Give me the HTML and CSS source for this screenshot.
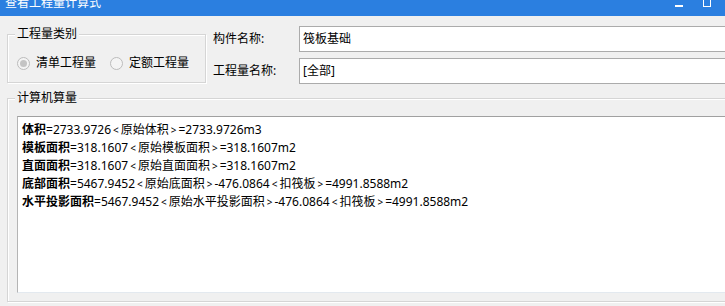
FILE: index.html
```html
<!DOCTYPE html>
<html lang="zh-CN">
<head>
<meta charset="utf-8">
<title>查看工程量计算式</title>
<link rel="stylesheet" href="styles.css">
</head>
<body>
<div class="window">
  <div class="titlebar">
    <span class="title">查看工程量计算式</span>
    <span class="controls">
      <span class="btn-min"></span>
      <span class="btn-max"></span>
    </span>
  </div>
  <div class="content">
    <div class="top-row">
      <fieldset class="group group-type">
        <legend>工程量类别</legend>
        <div class="radio-row">
          <span class="radio checked"><span class="dot"></span></span>
          <span class="radio-label">清单工程量</span>
          <span class="radio second"></span>
          <span class="radio-label">定额工程量</span>
        </div>
      </fieldset>
      <div class="form">
        <div class="form-row">
          <span class="form-label">构件名称:</span>
          <span class="input">筏板基础</span>
        </div>
        <div class="form-row">
          <span class="form-label">工程量名称:</span>
          <span class="input">[全部]</span>
        </div>
      </div>
    </div>
    <fieldset class="group group-calc">
      <legend>计算机算量</legend>
      <div class="textbox">
        <div class="line"><b>体积</b>=2733.9726<span class="ang">&lt;</span>原始体积<span class="ang">&gt;</span>=2733.9726m3</div>
        <div class="line"><b>模板面积</b>=318.1607<span class="ang">&lt;</span>原始模板面积<span class="ang">&gt;</span>=318.1607m2</div>
        <div class="line"><b>直面面积</b>=318.1607<span class="ang">&lt;</span>原始直面面积<span class="ang">&gt;</span>=318.1607m2</div>
        <div class="line"><b>底部面积</b>=5467.9452<span class="ang">&lt;</span>原始底面积<span class="ang">&gt;</span>-476.0864<span class="ang">&lt;</span>扣筏板<span class="ang">&gt;</span>=4991.8588m2</div>
        <div class="line"><b>水平投影面积</b>=5467.9452<span class="ang">&lt;</span>原始水平投影面积<span class="ang">&gt;</span>-476.0864<span class="ang">&lt;</span>扣筏板<span class="ang">&gt;</span>=4991.8588m2</div>
      </div>
    </fieldset>
  </div>
</div>
</body>
</html>
```

FILE: styles.css
```css
html, body {
  margin: 0;
  padding: 0;
  background: #f0f0f0;
}

body {
  width: 725px;
  height: 306px;
  overflow: hidden;
  font-family: "Noto Sans", "Noto Sans CJK SC", sans-serif;
  font-size: 12px;
  color: #000;
}

.window {
  width: 725px;
  height: 306px;
  overflow: hidden;
}

.titlebar {
  height: 16px;
  background: #2b7fe0;
  display: flex;
  align-items: flex-start;
  overflow: hidden;
}

.title {
  color: #fff;
  font-size: 12px;
  line-height: 16px;
  margin-top: -5px;
  margin-left: 5px;
  flex: 1;
}

.controls {
  display: flex;
  align-items: flex-start;
  margin-right: 14px;
}

.btn-min {
  width: 8px;
  height: 2px;
  background: #fff;
  margin-top: 5px;
}

.btn-max {
  width: 6px;
  height: 9px;
  border: 1px solid #fff;
  border-top-width: 2px;
  margin-top: -5px;
  margin-left: 20px;
}

.content {
  padding: 10px 0 0 7px;
}

.top-row {
  display: flex;
  align-items: flex-start;
}

.group {
  margin: 0;
  padding: 0;
  min-width: 0;
  border: 1px solid #d5d5d5;
  box-shadow: inset 1px 1px 0 #fff, 1px 1px 0 #fff;
}

.group legend {
  margin-left: -2px;
  padding: 0 2px;
  font-size: 12px;
  line-height: 16px;
  background: #f0f0f0;
}

.group-type {
  flex: none;
  width: 199px;
  box-sizing: border-box;
  padding: 13px 0 11px 9px;
}

.radio-row {
  display: flex;
  align-items: center;
  height: 16px;
  line-height: 16px;
  white-space: nowrap;
}

.radio {
  width: 11px;
  height: 11px;
  border-radius: 50%;
  border: 1px solid #bcbcbc;
  background: #f4f4f4;
  display: flex;
  align-items: center;
  justify-content: center;
  flex: none;
}

.radio .dot {
  width: 7px;
  height: 7px;
  border-radius: 50%;
  background: #c4c4c4;
}

.radio-label {
  margin-left: 6px;
  flex: none;
}

.radio.second {
  margin-left: 14px;
}

.form {
  flex: none;
  margin-left: 7px;
  display: flex;
  flex-direction: column;
  gap: 6px;
}

.form-row {
  display: flex;
  align-items: center;
}

.form-label {
  flex: none;
  width: 86px;
  line-height: 16px;
  white-space: nowrap;
}

.input {
  flex: none;
  width: 460px;
  height: 24px;
  line-height: 24px;
  border: 1px solid #ababab;
  background: #fff;
  padding-left: 3px;
}

.group-calc {
  margin-top: 6px;
  width: 760px;
  box-sizing: border-box;
  padding: 10px 0 8px 9px;
}

.textbox {
  height: 171px;
  background: #fff;
  border-top: 1px solid #a0a0a0;
  border-left: 1px solid #b4b4b4;
  border-bottom: 1px solid #e3e9ef;
  padding: 4px 0 0 4px;
}

.line {
  line-height: 17px;
  white-space: nowrap;
}

.line b {
  font-weight: bold;
}

.ang {
  font-size: 10px;
  padding: 0 2px;
}
```
